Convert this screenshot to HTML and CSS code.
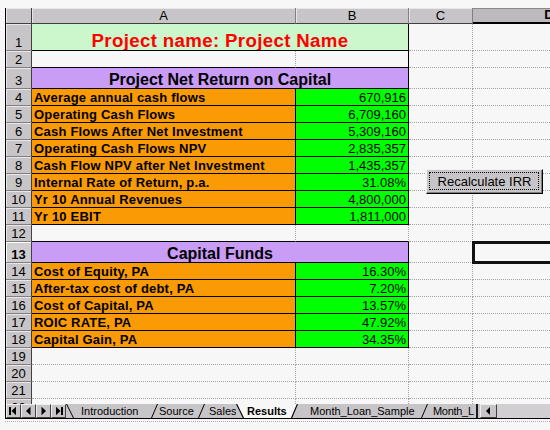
FILE: index.html
```html
<!DOCTYPE html>
<html>
<head>
<meta charset="utf-8">
<link rel="stylesheet" href="styles.css">
</head>
<body>
<div class="window">
  <div class="frame">
    <div class="sheet">
      <div class="grid">
        <div class="c corner"></div>
        <div class="c ch">A</div><div class="c ch">B</div><div class="c ch">C</div><div class="c ch chd">D</div>

        <div class="c rh">1</div><div class="c title">Project name: Project Name</div><div class="c"></div><div class="c"></div>
        <div class="c rh">2</div><div class="c bb"></div><div class="c bb br"></div><div class="c"></div><div class="c"></div>
        <div class="c rh">3</div><div class="c sec">Project Net Return on Capital</div><div class="c"></div><div class="c"></div>

        <div class="c rh">4</div><div class="c lbl">Average annual cash flows</div><div class="c val">670,916</div><div class="c"></div><div class="c"></div>
        <div class="c rh">5</div><div class="c lbl">Operating Cash Flows</div><div class="c val">6,709,160</div><div class="c"></div><div class="c"></div>
        <div class="c rh">6</div><div class="c lbl">Cash Flows After Net Investment</div><div class="c val">5,309,160</div><div class="c"></div><div class="c"></div>
        <div class="c rh">7</div><div class="c lbl">Operating Cash Flows NPV</div><div class="c val">2,835,357</div><div class="c"></div><div class="c"></div>
        <div class="c rh">8</div><div class="c lbl">Cash Flow NPV after Net Investment</div><div class="c val">1,435,357</div><div class="c"></div><div class="c"></div>
        <div class="c rh">9</div><div class="c lbl">Internal Rate of Return, p.a.</div><div class="c val">31.08%</div><div class="c"></div><div class="c"></div>
        <div class="c rh">10</div><div class="c lbl">Yr 10 Annual Revenues</div><div class="c val">4,800,000</div><div class="c"></div><div class="c"></div>
        <div class="c rh">11</div><div class="c lbl">Yr 10 EBIT</div><div class="c val">1,811,000</div><div class="c"></div><div class="c"></div>
        <div class="c rh">12</div><div class="c bb"></div><div class="c bb"></div><div class="c"></div><div class="c"></div>

        <div class="c rh rhsel">13</div><div class="c sec">Capital Funds</div><div class="c"></div><div class="c sel"></div>

        <div class="c rh">14</div><div class="c lbl">Cost of Equity, PA</div><div class="c val">16.30%</div><div class="c"></div><div class="c"></div>
        <div class="c rh">15</div><div class="c lbl">After-tax cost of debt, PA</div><div class="c val">7.20%</div><div class="c"></div><div class="c"></div>
        <div class="c rh">16</div><div class="c lbl">Cost of Capital, PA</div><div class="c val">13.57%</div><div class="c"></div><div class="c"></div>
        <div class="c rh">17</div><div class="c lbl">ROIC RATE, PA</div><div class="c val">47.92%</div><div class="c"></div><div class="c"></div>
        <div class="c rh">18</div><div class="c lbl">Capital Gain, PA</div><div class="c val">34.35%</div><div class="c"></div><div class="c"></div>
        <div class="c rh">19</div><div class="c"></div><div class="c"></div><div class="c"></div><div class="c"></div>
        <div class="c rh">20</div><div class="c"></div><div class="c"></div><div class="c"></div><div class="c"></div>
        <div class="c rh">21</div><div class="c"></div><div class="c"></div><div class="c"></div><div class="c"></div>
        <div class="c rh">22</div><div class="c"></div><div class="c"></div><div class="c"></div><div class="c"></div>
      </div>
      <button class="btn" type="button">Recalculate IRR</button>
    </div>

    <div class="tabbar">
      <div class="nav"><svg width="13" height="12" viewBox="0 0 13 12"><rect x="2" y="2" width="2" height="8" fill="#000"/><polygon points="4.5,6 9,1.8 9,10.2" fill="#000"/></svg></div>
      <div class="nav"><svg width="13" height="12" viewBox="0 0 13 12"><polygon points="4,6 8.5,1.8 8.5,10.2" fill="#000"/></svg></div>
      <div class="nav"><svg width="13" height="12" viewBox="0 0 13 12"><polygon points="9,6 4.5,1.8 4.5,10.2" fill="#000"/></svg></div>
      <div class="nav"><svg width="13" height="12" viewBox="0 0 13 12"><polygon points="8.5,6 4,1.8 4,10.2" fill="#000"/><rect x="9" y="2" width="2" height="8" fill="#000"/></svg></div>

      <svg class="slant w8" width="8" height="14" viewBox="0 0 8 14"><line x1="0.5" y1="0" x2="7.5" y2="14" stroke="#000" stroke-width="1"/></svg>
      <span class="tab t-intro">Introduction</span>
      <svg class="slant" width="7" height="14" viewBox="0 0 7 14"><line x1="0.5" y1="14" x2="6.5" y2="0" stroke="#000" stroke-width="1"/></svg>
      <span class="tab t-source">Source</span>
      <svg class="slant" width="7" height="14" viewBox="0 0 7 14"><line x1="0.5" y1="14" x2="6.5" y2="0" stroke="#000" stroke-width="1"/></svg>
      <span class="tab t-sales">Sales</span>
      <svg class="slant w8" width="8" height="14" viewBox="0 0 8 14"><polygon points="0,0 8,0 8,14" fill="#f7f7f7"/><line x1="0.5" y1="0" x2="7.5" y2="14" stroke="#000" stroke-width="1.2"/></svg>
      <span class="tab t-active">Results</span>
      <svg class="slant" width="7" height="14" viewBox="0 0 7 14"><polygon points="0,0 7,0 0,14" fill="#f7f7f7"/><line x1="0.5" y1="14" x2="6.5" y2="0" stroke="#000" stroke-width="1.2"/></svg>
      <span class="tab t-mls">Month_Loan_Sample</span>
      <svg class="slant" width="7" height="14" viewBox="0 0 7 14"><line x1="0.5" y1="14" x2="6.5" y2="0" stroke="#000" stroke-width="1"/></svg>
      <span class="tab t-ml">Month_L</span>
      <div class="split"></div>
      <div class="sbtn"><svg width="15" height="12" viewBox="0 0 15 12"><polygon points="5,6 9,2 9,10" fill="#000"/></svg></div>
      <div class="track"></div>
    </div>
  </div>
  <div class="below"></div>
</div>
</body>
</html>
```

FILE: styles.css
```css
* { box-sizing: border-box; }
html, body { margin: 0; padding: 0; }
body {
  background: #f7f7f7;
  font-family: "Liberation Sans", Arial, sans-serif;
  width: 550px;
  height: 430px;
  overflow: hidden;
  color: #000;
}
.window { padding: 8px 0 0 5px; }
.frame { border-left: 1px solid #000; }
.sheet { position: relative; height: 396px; overflow: hidden; }

.grid {
  display: grid;
  grid-template-columns: 26px 264px 113px 64px 153px;
  grid-template-rows: 16px 27px 17px 21px repeat(9, 17px) 21px repeat(9, 17px);
  width: 620px;
}

.c {
  display: flex;
  align-items: flex-end;
  border-right: 1px dotted #aaa2aa;
  border-bottom: 1px dotted #aaa2aa;
  font-size: 13px;
  line-height: 14px;
  white-space: nowrap;
  overflow: hidden;
}

.corner, .ch, .rh {
  background: #c8c5c8;
  box-shadow: inset 1px 1px 0 #e8e6e8;
  justify-content: center;
}
.ch {
  border-right: 1px solid #808080;
  border-bottom: 1px solid #404040;
}
.corner {
  border-right: 1px solid #404040;
  border-bottom: 1px solid #404040;
}
.chd {
  font-weight: bold;
  background: #bdbabd;
  box-shadow: inset 0 1px 0 #8a888a;
  border-bottom: 2px solid #000;
}
.rh {
  border-right: 1px solid #404040;
  border-bottom: 1px solid #808080;
}
.rhsel {
  font-weight: bold;
  box-shadow: inset 1px 1px 0 #ffffff;
  background: #d0cdd0;
}

.title {
  grid-column: 2 / 4;
  background: #ccf6cc;
  border-right: 1px solid #000;
  border-bottom: 1px solid #000;
  justify-content: center;
  color: #ff0000;
  font-weight: bold;
  font-size: 18.67px;
  line-height: 19px;
  letter-spacing: 0.35px;
}
.sec {
  grid-column: 2 / 4;
  background: #c99cf6;
  border-right: 1px solid #000;
  border-bottom: 1px solid #000;
  justify-content: center;
  font-weight: bold;
  font-size: 16px;
  line-height: 17px;
}
.lbl {
  background: #fa9a04;
  border-right: 1px solid #000;
  border-bottom: 1px solid #000;
  font-weight: bold;
  padding-left: 2px;
  letter-spacing: 0.2px;
}
.val {
  background: #00ff00;
  border-right: 1px solid #000;
  border-bottom: 1px solid #000;
  justify-content: flex-end;
  padding-right: 2px;
}
.bb { border-bottom: 1px solid #000; }
.br { border-right: 1px solid #000; }

.sel {
  position: relative;
  z-index: 1;
  overflow: visible;
  outline: 3px solid #111;
  outline-offset: -2px;
}

.btn {
  position: absolute;
  left: 420px;
  top: 161px;
  width: 117px;
  height: 25px;
  margin: 0;
  padding: 0 0 1px 0;
  background: #c8c5c8;
  border: 1px solid;
  border-color: #f2f2f2 #000 #000 #f2f2f2;
  box-shadow: inset -1px -1px 0 #808080;
  font-family: "Liberation Sans", Arial, sans-serif;
  font-size: 13px;
  color: #000;
  z-index: 2;
}
.btn::before {
  content: "";
  position: absolute;
  left: 2px;
  top: 2px;
  right: 3px;
  bottom: 3px;
  border: 1px dotted #000;
}

.tabbar {
  display: flex;
  height: 15px;
  border-bottom: 1px solid #000;
  background: #c8c5c8;
}
.nav {
  width: 15px;
  height: 14px;
  flex: none;
  border: 1px solid;
  border-color: #eeeeee #404040 #404040 #eeeeee;
  display: flex;
  align-items: center;
  justify-content: center;
}
.nav svg { display: block; }
.slant { display: block; flex: none; width: 7px; height: 14px; }
.slant.w8 { width: 8px; }
.tab {
  flex: none;
  height: 14px;
  font-size: 11px;
  line-height: 13px;
  padding-top: 1px;
  white-space: nowrap;
  overflow: hidden;
}
.t-intro { width: 77px; padding-left: 7px; }
.t-source { width: 40px; padding-left: 1px; }
.t-sales { width: 31px; padding-left: 4px; }
.t-active { width: 47px; padding-left: 3px; font-weight: bold; background: #f7f7f7; }
.t-mls { width: 123px; padding-left: 12px; }
.t-ml { width: 48px; padding-left: 5px; letter-spacing: -0.3px; }
.split {
  flex: none;
  width: 4px;
  height: 14px;
  border-left: 2px solid #1a1a1a;
  background: #c8c5c8;
}
.sbtn {
  flex: none;
  width: 17px;
  height: 14px;
  border: 1px solid;
  border-color: #eeeeee #404040 #404040 #eeeeee;
  display: flex;
  align-items: center;
  justify-content: center;
}
.sbtn svg { display: block; }
.track {
  flex: 1;
  height: 14px;
  background: #d2cfd2;
}
.below {
  height: 12px;
  margin-top: 2px;
  border-top: 1px dotted #b8a8b8;
}
```
